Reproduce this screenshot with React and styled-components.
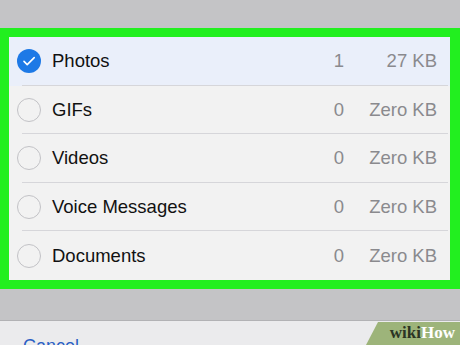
import React from 'react';
import styled, { createGlobalStyle } from 'styled-components';

const GlobalStyle = createGlobalStyle`
    html, body {
        margin: 0;
        padding: 0;
        background: #c4c4c6;
    }
    body {
        font-family: "Liberation Sans", Arial, sans-serif;
    }
`;

const items = [
    { name: 'Photos', count: '1', size: '27 KB', checked: true },
    { name: 'GIFs', count: '0', size: 'Zero KB' },
    { name: 'Videos', count: '0', size: 'Zero KB' },
    { name: 'Voice Messages', count: '0', size: 'Zero KB' },
    { name: 'Documents', count: '0', size: 'Zero KB' },
];

const Check = ({ checked }) => (
    <Circle $checked={checked}>
        {checked && (
            <svg width="24" height="24" viewBox="0 0 24 24">
                <path d="M7 12.4l3.2 3.2L17.2 8.6" fill="none" stroke="#fff" strokeWidth="1.6" strokeLinecap="round" strokeLinejoin="round" />
            </svg>
        )}
    </Circle>
);

const App = () => {
    return (
        <Page>
            <GlobalStyle />
            <TopBand />
            <Highlight>
                {items.map((item, i) => (
                    <Row key={item.name} $checked={item.checked} $last={i === items.length - 1}>
                        <Check checked={item.checked} />
                        <Name>{item.name}</Name>
                        <Count>{item.count}</Count>
                        <Size>{item.size}</Size>
                    </Row>
                ))}
            </Highlight>
            <GrayBand />
            <Footer>
                <Cancel>Cancel</Cancel>
                <Watermark>
                    <Wiki>wiki</Wiki>
                    <How>How</How>
                </Watermark>
            </Footer>
        </Page>
    );
};

const Page = styled.div`
    width: 460px;
    height: 345px;
    overflow: hidden;
    background: #c4c4c6;
    display: flex;
    flex-direction: column;
`;

const TopBand = styled.div`
    height: 28px;
    flex-shrink: 0;
`;

const Highlight = styled.div`
    border: 9px solid #22ef1f;
    border-right-width: 10px;
    background: #f2f2f2;
    display: flex;
    flex-direction: column;
    flex-shrink: 0;
`;

const Row = styled.div`
    height: 48.6px;
    box-sizing: border-box;
    display: grid;
    grid-template-columns: 24px 1fr auto 93px;
    align-items: center;
    padding: 0 13px 0 8px;
    background: ${p => (p.$checked ? '#eaeffa' : '#f2f2f2')};
    position: relative;
    &::after {
        content: '';
        display: ${p => (p.$last ? 'none' : 'block')};
        position: absolute;
        left: 13px;
        right: 2px;
        bottom: 0;
        height: 1px;
        background: #d6d6da;
    }
`;

const Circle = styled.div`
    width: 24px;
    height: 24px;
    box-sizing: border-box;
    border-radius: 50%;
    border: ${p => (p.$checked ? 'none' : '1px solid #c2c2c6')};
    background: ${p => (p.$checked ? '#1d79e6' : 'transparent')};
    display: flex;
    align-items: center;
    justify-content: center;
`;

const Name = styled.div`
    font-size: 18.5px;
    color: #111;
    padding-left: 11px;
`;

const Count = styled.div`
    font-size: 18.5px;
    color: #8a8a8e;
    text-align: right;
`;

const Size = styled.div`
    font-size: 18.5px;
    color: #8a8a8e;
    text-align: right;
`;

const GrayBand = styled.div`
    height: 31px;
    flex-shrink: 0;
    border-bottom: 1px solid #b2b2b5;
`;

const Footer = styled.div`
    flex: 0 0 24px;
    box-sizing: border-box;
    overflow: hidden;
    background: #ebebed;
    position: relative;
    padding: 15px 0 0 23px;
`;

const Cancel = styled.div`
    font-size: 18px;
    line-height: 21px;
    color: #2a5fc4;
`;

const Watermark = styled.div`
    position: absolute;
    right: 0;
    bottom: 0;
    width: 94px;
    height: 23px;
    box-sizing: border-box;
    background: #9db47a;
    clip-path: polygon(12px 0, 100% 0, 100% 100%, 0 100%);
    display: flex;
    align-items: center;
    justify-content: flex-end;
    padding: 0 5px 2px 0;
    font-family: "Liberation Serif", "Times New Roman", serif;
    font-weight: bold;
    font-size: 17px;
    line-height: 1;
`;

const Wiki = styled.span`
    color: #2b3524;
`;

const How = styled.span`
    color: #ffffff;
`;

export default App;
